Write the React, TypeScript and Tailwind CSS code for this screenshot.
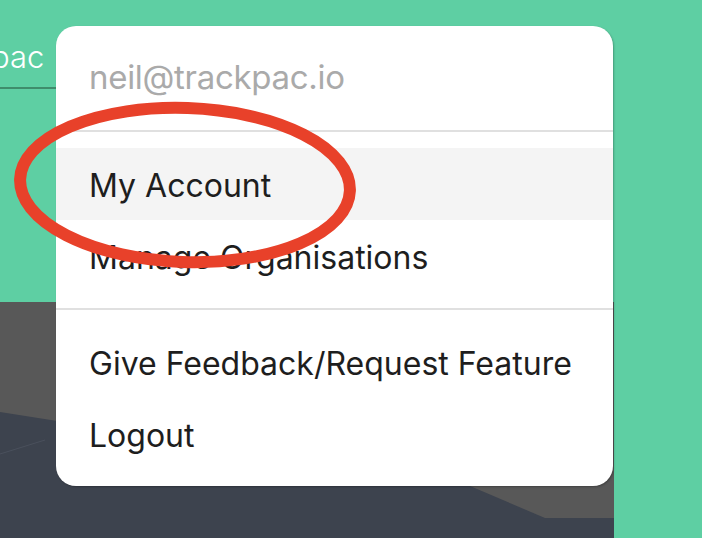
import React from 'react';

const items = [
    { label: 'My Account', active: true },
    { label: 'Manage Organisations', active: false },
];

const App: React.FC = () => {
    return (
        <div className="relative w-[702px] h-[538px] overflow-hidden bg-[#5ecfa3] font-['Inter',sans-serif]">
            <div className="h-[302px] flex flex-col">
                <div className="mt-[38px] w-[56px] border-b-2 border-[#3f8d6c] pb-[11px]">
                    <span className="block -ml-[9px] text-[31px] leading-[38px] font-light text-white whitespace-nowrap">
                        pac
                    </span>
                </div>
            </div>
            <div className="flex h-[236px]">
                <div className="w-[614px] h-full bg-[#585858]">
                    <svg width="614" height="236" viewBox="0 0 614 236">
                        <polygon points="0,110 470,184 545,216 614,216 614,236 0,236" fill="#3d434e" />
                        <line x1="0" y1="152" x2="45" y2="138" stroke="#4a505c" strokeWidth="1" />
                    </svg>
                </div>
            </div>

            {/* dropdown menu */}
            <div className="absolute left-[56px] top-[26px] w-[557px] h-[460px] bg-white rounded-[20px] shadow-[1px_1px_2px_rgba(0,0,0,0.25)] flex flex-col">
                <div className="h-[104px] flex items-center pl-[33px] text-[33px] text-[#aaaaaa] tracking-[-0.3px] whitespace-nowrap">
                    neil@trackpac.io
                </div>
                <div className="h-[2px] bg-[#e0e0e0]" />
                <div className="pt-[16px] pb-[16px] flex flex-col">
                    {items.map((it) => (
                        <div
                            key={it.label}
                            className={`h-[72px] flex items-center pl-[33px] pt-[4px] text-[32px] text-[#1e1e1e] whitespace-nowrap ${it.active ? 'bg-[#f4f4f4]' : ''}`}
                        >
                            {it.label}
                        </div>
                    ))}
                </div>
                <div className="h-[2px] bg-[#e0e0e0]" />
                <div className="pt-[16px] flex flex-col">
                    <div className="h-[72px] flex items-center pl-[33px] pt-[4px] text-[32px] text-[#1e1e1e] whitespace-nowrap">
                        Give Feedback/Request Feature
                    </div>
                    <div className="h-[72px] flex items-center pl-[33px] pt-[4px] text-[32px] text-[#1e1e1e] whitespace-nowrap">
                        Logout
                    </div>
                </div>
            </div>

            {/* annotation circle */}
            <svg className="absolute left-0 top-0 pointer-events-none" width="702" height="538">
                <ellipse cx="185" cy="185" rx="165" ry="77" fill="none" stroke="#e8412a" strokeWidth="12" transform="rotate(2 185 185)" />
            </svg>
        </div>
    );
};

export default App;
